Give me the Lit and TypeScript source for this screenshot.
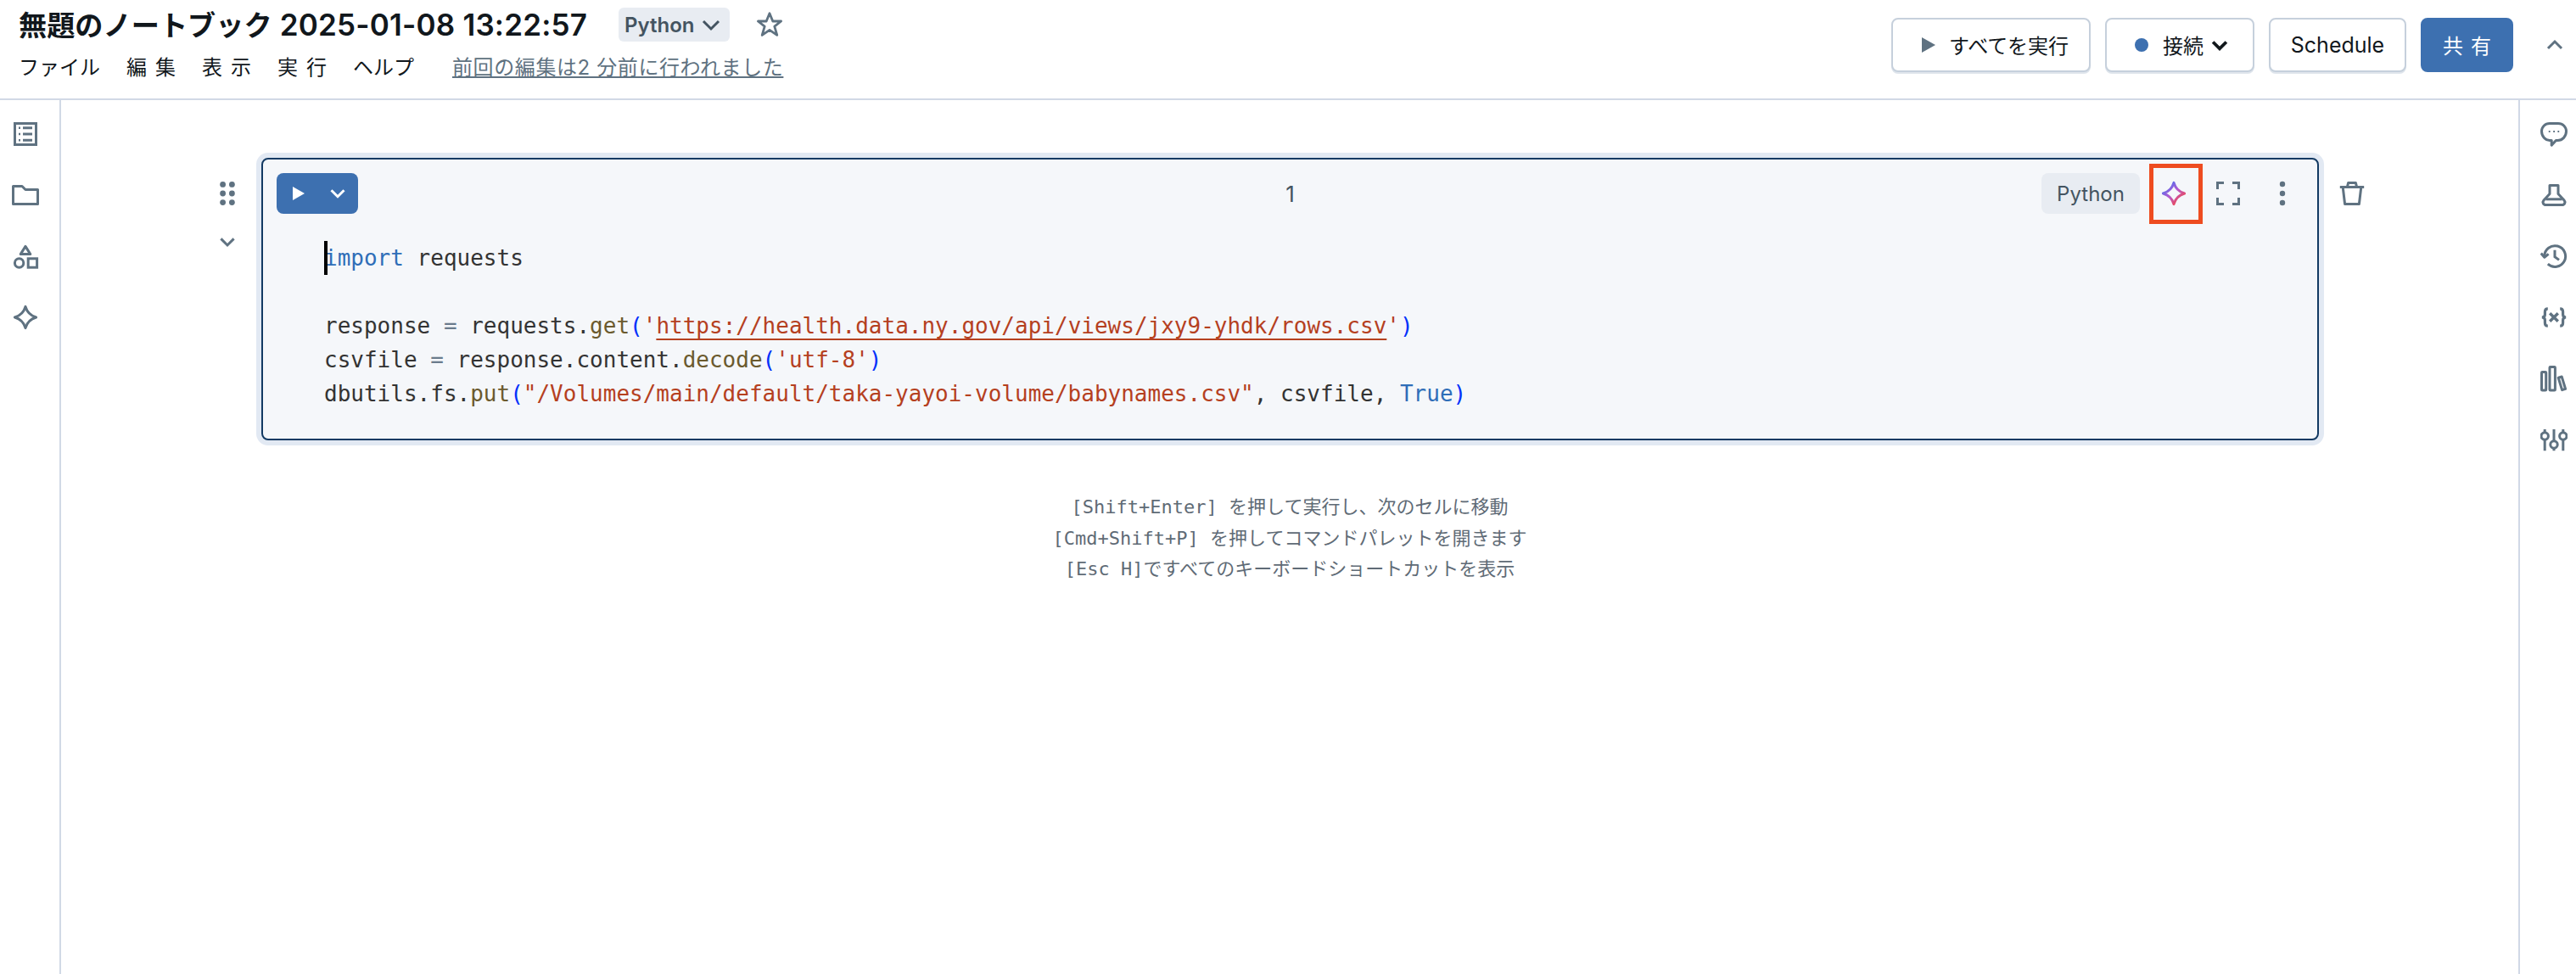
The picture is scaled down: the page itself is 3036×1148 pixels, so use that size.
import { LitElement, html, css, svg } from "lit";
import { customElement } from "lit/decorators.js";

const ic = (body: unknown, cls = "") => html`<svg class="ic ${cls}" viewBox="0 0 16 16" fill="none" stroke="currentColor" stroke-width="1.5">${body}</svg>`;
const sparklePath = "M8 1.7 Q9.4 6.6 14.3 8 Q9.4 9.4 8 14.3 Q6.6 9.4 1.7 8 Q6.6 6.6 8 1.7Z";
const chevronDown = svg`<path d="M3.5 6 8 10.5 12.5 6"/>`;
const chevronSmall = svg`<path d="M4.2 6.2 8 10 11.8 6.2"/>`;

const list = svg`<rect x="1.75" y="1.75" width="12.5" height="12.5"/><path d="M6.5 4.4H12M6.5 8H12M6.5 11.6H12"/><path d="M4 4.4h1M4 8h1M4 11.6h1" stroke-width="1.3"/>`;
const folder = svg`<path d="M.75 2.75H6L8 4.75H15.25V13.25H.75Z" stroke-linejoin="round"/>`;
const shapes = svg`<path d="M8 2.2 10.9 6.8H5.1Z" stroke-linejoin="round"/><circle cx="4.3" cy="12" r="2.6"/><rect x="9.6" y="9.4" width="5.2" height="5.2"/>`;
const sparkle = svg`<path d="${sparklePath}" stroke-linejoin="round"/>`;
const comment = svg`<path d="M5.5 1.75H10.5C13.3 1.75 15.25 3.8 15.25 6.4 15.25 9.4 13 11.7 10.3 11.7H9.2L6.6 14.6V11.7H5.5C2.8 11.7.75 9.4.75 6.4.75 3.8 2.7 1.75 5.5 1.75Z" stroke-linejoin="round"/><path d="M4.9 6.5h.9M7.6 6.5h.9M10.2 6.5h.9" stroke-width="1.1"/>`;
const flask = svg`<path d="M5.5 2.2H10.5V7.2L14 11C15 12.2 14.3 13.8 12.8 13.8H3.2C1.7 13.8 1 12.2 2 11L5.5 7.2Z" stroke-linejoin="round"/><path d="M3.2 10.4H12.8"/>`;
const history = svg`<path d="M2.4 8A6.2 6.2 0 1 1 4.4 12.6"/><path d="M.4 6.3 2.4 8.6 4.8 6.7" stroke-linejoin="round"/><path d="M8.5 4.4V8.4L11 10.2"/>`;
const variable = svg`<path d="M4.4 2.9C3 2.9 2.7 3.6 2.7 4.8V6.4C2.7 7.3 2 8 .9 8 2 8 2.7 8.7 2.7 9.6V11.2C2.7 12.4 3 13.1 4.4 13.1M11.6 2.9C13 2.9 13.3 3.6 13.3 4.8V6.4C13.3 7.3 14 8 15.1 8 14 8 13.3 8.7 13.3 9.6V11.2C13.3 12.4 13 13.1 11.6 13.1" stroke-width="1.6"/><path d="M5.6 5.6 10.4 10.4M10.4 5.6 5.6 10.4" stroke-width="1.7"/>`;
const books = svg`<rect x=".75" y="4.2" width="2.6" height="10.8" rx=".4"/><rect x="5.5" y="1.2" width="3.2" height="13.8" rx=".4"/><path d="M10.6 7.6 12.6 7 14.8 14.2 12.8 14.8Z" stroke-linejoin="round"/>`;
const sliders = svg`<path d="M2.6 8.4V14.6M2.6 2V3.6M8 2V8.6M8 13.2V14.6M13.4 8.4V14.6M13.4 2V3.6"/><circle cx="2.6" cy="6" r="2.1"/><circle cx="8" cy="11" r="2.1"/><circle cx="13.4" cy="6" r="2.1"/>`;

@customElement("app-root")
export class AppRoot extends LitElement {
  static styles = css`
    :host { display: flex; flex-direction: column; height: 1148px; width: 3036px; background: #fff; color: #11171c;
      font-family: Inter, "Noto Sans CJK JP", sans-serif; overflow: hidden; }
    .ic { width: 32px; height: 32px; display: block; flex: none; color: #5f7281; }
    header { height: 116px; border-bottom: 2px solid #d1d9e6; display: flex; justify-content: space-between; flex: none; }
    .hl { padding: 9px 0 0 22px; display: flex; flex-direction: column; gap: 8px; }
    .title-row { display: flex; align-items: center; height: 40px; }
    h1 { margin: 0 0 3px; font-size: 35px; font-weight: 600; white-space: nowrap; letter-spacing: .2px; width: 707px; }
    h1 span { font-size: 33.2px; letter-spacing: 0; }
    .lang { display: flex; align-items: center; gap: 4px; height: 40px; width: 131px; box-sizing: border-box; padding-left: 7px; background: #e8ecf2; border-radius: 6px; font-size: 24px; font-weight: 600; color: #445461; }
    .lang .ic { margin-left: -1px; color: #445461; }
    .star { margin-left: 31px; }
    .menu { display: flex; align-items: center; font-size: 24px; height: 40px; white-space: nowrap; }
    .menu span { margin-right: 31px; }
    .menu .w2 { letter-spacing: 10px; margin-right: 21px; }
    .menu a { margin-left: 14px; color: #5f7281; text-decoration: underline; font-size: 24px; letter-spacing: .6px; }
    .hr { display: flex; align-items: flex-start; padding: 21px 9px 0 0; }
    .btn { height: 64px; box-sizing: border-box; border: 2px solid #c6d0dc; border-radius: 8px; box-shadow: 0 2px 0 #dfe5ec; display: flex; align-items: center; background: #fff; font-size: 24px; white-space: nowrap; margin-right: 17px; }
    .b1 { width: 235px; padding: 0 0 2px 34px; }
    .b1 i { width: 0; height: 0; border-left: 16px solid #5f7281; border-top: 9px solid transparent; border-bottom: 9px solid transparent; margin: 2px 16px 0 0; }
    .b2 { width: 176px; padding: 0 0 2px 33px; }
    .b2 i { width: 16px; height: 16px; border-radius: 50%; background: #3d70b0; margin: 2px 17px 0 0; }
    .b2 .ic { width: 28px; height: 28px; stroke-width: 2.2; color: #11171c; margin: 2px 0 0 5px; }
    .b3 { width: 162px; justify-content: center; font-size: 25px; }
    .b4 { width: 109px; justify-content: center; background: #3d70b0; border-color: #3d70b0; color: #fff; letter-spacing: 9px; padding: 0 0 2px 9px; box-shadow: none; margin-right: 33px; }
    .collapse { margin-top: 16px; }
    .body { flex: 1; display: flex; min-height: 0; }
    .rail { flex: none; display: flex; flex-direction: column; gap: 40px; padding-top: 24px; box-sizing: border-box; }
    .rl { width: 72px; border-right: 2px solid #d1d9e6; padding-left: 14px; }
    .rr { width: 68px; border-left: 2px solid #d1d9e6; padding-left: 24px; }
    main { flex: 1; min-width: 0; padding-top: 68px; }
    .row { display: grid; grid-template-columns: 236px 1fr 235px; }
    .gl { display: flex; flex-direction: column; align-items: flex-end; gap: 25px; padding: 26px 24px 0 0; }
    .gr { padding: 26px 0 0 23px; }
    .cell { background: #f5f7fa; border: 2px solid #133a63; border-radius: 8px; box-shadow: 0 0 0 6px #e2e9f3; padding: 16px 0 33px; height: 333px; box-sizing: border-box; min-width: 0; }
    .head { display: grid; grid-template-columns: 1fr auto 1fr; align-items: center; height: 48px; padding: 0 9px; }
    .run { width: 96px; height: 48px; margin-left: 7px; border-radius: 8px; background: #3d70b0; display: flex; align-items: center; }
    .run svg { display: block; }
    .run .pl { margin-left: 18px; width: 16px; height: 18px; fill: #fff; }
    .run .c { margin-left: 26px; width: 24px; height: 24px; fill: none; stroke: #fff; stroke-width: 2; }
    .num { font-size: 26px; color: #445461; }
    .acts { display: flex; justify-content: flex-end; align-items: center; }
    .chip { width: 116px; height: 48px; border-radius: 8px; background: #e8ecf2; color: #445461; font-size: 24px; display: flex; align-items: center; justify-content: center; margin-right: 8px; }
    .act { width: 64px; height: 48px; display: flex; align-items: center; justify-content: center; position: relative; }
    .mark { position: absolute; left: 3px; top: -11px; width: 63px; height: 71px; box-sizing: border-box; border: 5px solid #ee4c20; }
    .code { margin: 32px 0 0; padding-left: 72px; font: 26px/40px "DejaVu Sans Mono", monospace; color: #333; position: relative; }
    .ln { min-height: 40px; white-space: pre; }
    .caret { position: absolute; left: 72px; top: 0; width: 4px; height: 40px; background: #000; }
    .k { color: #2f6eb8; } .f { color: #6b5a2e; } .p { color: #0431fa; } .s { color: #b5401f; } .o { color: #6a7b8c; }
    .u { text-decoration: underline; text-decoration-thickness: 2px; text-underline-offset: 6px; }
    .hints { margin-top: 61px; text-align: center; font: 22px/36.5px "DejaVu Sans Mono", "Noto Sans CJK JP", monospace; color: #5f6b76; }
    .hints div { white-space: pre; }
  `;

  render() {
    return html`
      <header>
        <div class="hl">
          <div class="title-row">
            <h1><span>無題のノートブック</span> 2025-01-08 13:22:57</h1>
            <div class="lang">Python ${ic(chevronDown)}</div>
            <svg class="ic star" viewBox="0 0 16 16" fill="none" stroke="currentColor" stroke-width="1.4"><path d="M8 1.4 9.9 6H14.8L10.9 9.1 12.4 14.2 8 11.2 3.6 14.2 5.1 9.1 1.2 6H6.1Z" stroke-linejoin="round"/></svg>
          </div>
          <nav class="menu">
            <span>ファイル</span><span class="w2">編集</span><span class="w2">表示</span><span class="w2">実行</span><span>ヘルプ</span>
            <a>前回の編集は2 分前に行われました</a>
          </nav>
        </div>
        <div class="hr">
          <div class="btn b1"><i></i>すべてを実行</div>
          <div class="btn b2"><i></i>接続${ic(chevronDown)}</div>
          <div class="btn b3">Schedule</div>
          <div class="btn b4">共有</div>
          ${ic(svg`<path d="M4 10 8 6 12 10"/>`, "collapse")}
        </div>
      </header>
      <div class="body">
        <aside class="rail rl">${ic(list)}${ic(folder)}${ic(shapes)}${ic(sparkle)}</aside>
        <main>
          <div class="row">
            <div class="gl">
              <svg class="ic" viewBox="0 0 16 16" fill="currentColor"><circle cx="5.3" cy="2.7" r="1.7"/><circle cx="10.7" cy="2.7" r="1.7"/><circle cx="5.3" cy="8" r="1.7"/><circle cx="10.7" cy="8" r="1.7"/><circle cx="5.3" cy="13.3" r="1.7"/><circle cx="10.7" cy="13.3" r="1.7"/></svg>
              ${ic(chevronSmall)}
            </div>
            <section class="cell">
              <div class="head">
                <div class="run">
                  <svg class="pl" viewBox="0 0 16 18"><path d="M1 1 15 9 1 17Z"/></svg>
                  <svg class="c" viewBox="0 0 16 16"><path d="M3 5.5 8 10.5 13 5.5"/></svg>
                </div>
                <div class="num">1</div>
                <div class="acts">
                  <div class="chip">Python</div>
                  <div class="act">
                    <svg class="ic" viewBox="0 0 16 16" fill="none" stroke="url(#spark)" stroke-width="1.5">
                      <defs><linearGradient id="spark" x1="0.1" y1="0.1" x2="0.8" y2="0.9"><stop offset="0" stop-color="#4a6ff0"/><stop offset=".5" stop-color="#b45ad0"/><stop offset="1" stop-color="#f0484f"/></linearGradient></defs>
                      <path d="${sparklePath}" stroke-linejoin="round"/>
                    </svg>
                    <div class="mark"></div>
                  </div>
                  <div class="act">${ic(svg`<path d="M1.75 5.5V1.75H5.5M10.5 1.75H14.25V5.5M14.25 10.5V14.25H10.5M5.5 14.25H1.75V10.5"/>`)}</div>
                  <div class="act"><svg class="ic" viewBox="0 0 16 16" fill="currentColor"><circle cx="8" cy="2.5" r="1.6"/><circle cx="8" cy="8" r="1.6"/><circle cx="8" cy="13.5" r="1.6"/></svg></div>
                </div>
              </div>
              <div class="code">
                <i class="caret"></i>
                <div class="ln"><span class="k">import</span> requests</div>
                <div class="ln"></div>
                <div class="ln">response <span class="o">=</span> requests.<span class="f">get</span><span class="p">(</span><span class="s">'<span class="u">https://health.data.ny.gov/api/views/jxy9-yhdk/rows.csv</span>'</span><span class="p">)</span></div>
                <div class="ln">csvfile <span class="o">=</span> response.content.<span class="f">decode</span><span class="p">(</span><span class="s">'utf-8'</span><span class="p">)</span></div>
                <div class="ln">dbutils.fs.<span class="f">put</span><span class="p">(</span><span class="s">"/Volumes/main/default/taka-yayoi-volume/babynames.csv"</span>, csvfile, <span class="k">True</span><span class="p">)</span></div>
              </div>
            </section>
            <div class="gr">${ic(svg`<path d="M2.6 4.2 3.8 14.25H12.2L13.4 4.2M.9 4.2H15.1M5.2 4.2 5.8 1.75H10.2L10.8 4.2" stroke-linejoin="round"/>`)}</div>
          </div>
          <div class="hints">
            <div>[Shift+Enter] を押して実行し、次のセルに移動</div>
            <div>[Cmd+Shift+P] を押してコマンドパレットを開きます</div>
            <div>[Esc H]ですべてのキーボードショートカットを表示</div>
          </div>
        </main>
        <aside class="rail rr">${ic(comment)}${ic(flask)}${ic(history)}${ic(variable)}${ic(books)}${ic(sliders)}</aside>
      </div>
    `;
  }
}
